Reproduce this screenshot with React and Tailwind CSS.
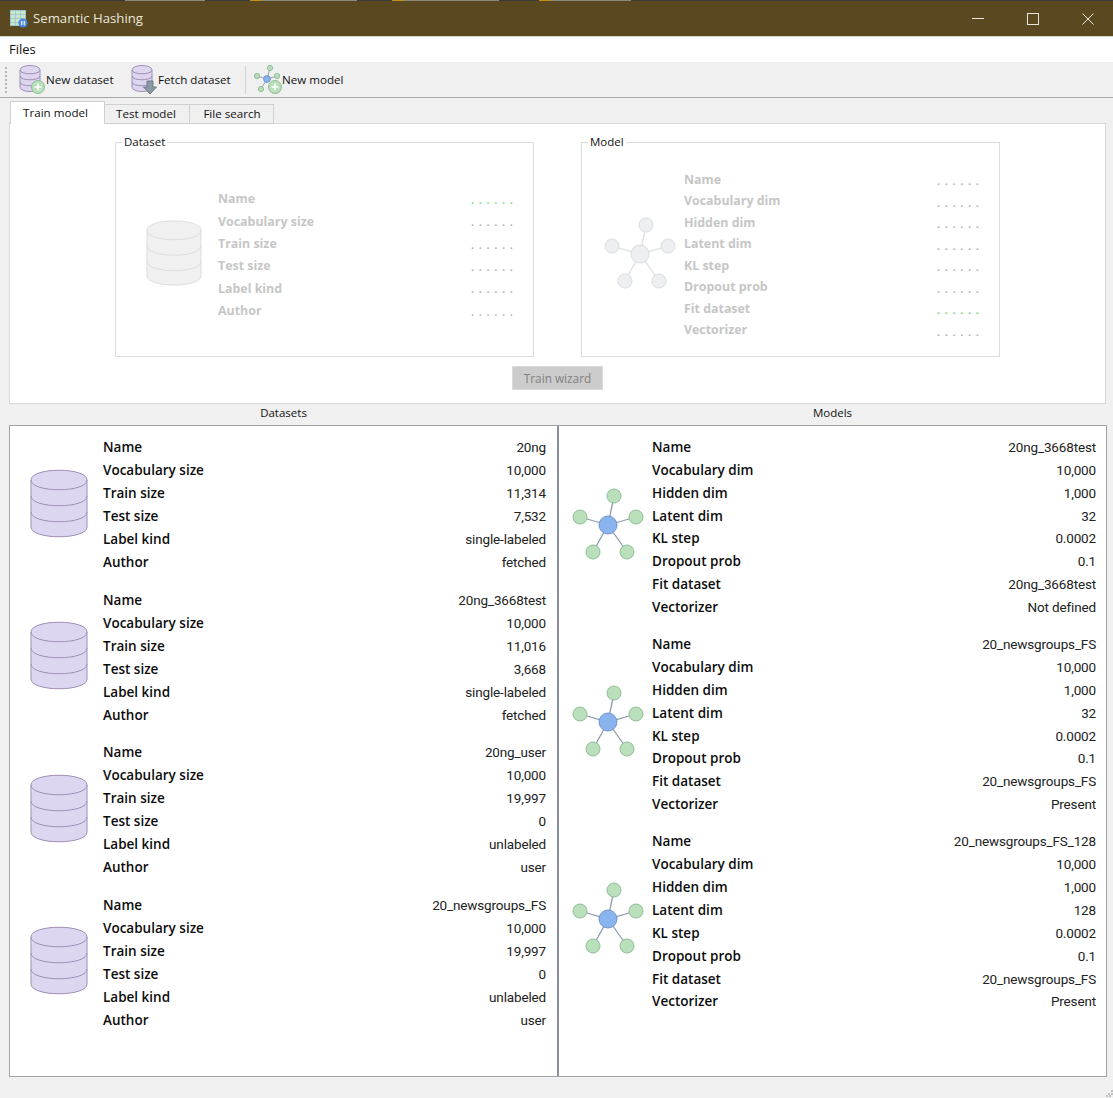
import React from 'react';

const datasets = [
  ['20ng', '10,000', '11,314', '7,532', 'single-labeled', 'fetched'],
  ['20ng_3668test', '10,000', '11,016', '3,668', 'single-labeled', 'fetched'],
  ['20ng_user', '10,000', '19,997', '0', 'unlabeled', 'user'],
  ['20_newsgroups_FS', '10,000', '19,997', '0', 'unlabeled', 'user'],
];
const models = [
  ['20ng_3668test', '10,000', '1,000', '32', '0.0002', '0.1', '20ng_3668test', 'Not defined'],
  ['20_newsgroups_FS', '10,000', '1,000', '32', '0.0002', '0.1', '20_newsgroups_FS', 'Present'],
  ['20_newsgroups_FS_128', '10,000', '1,000', '128', '0.0002', '0.1', '20_newsgroups_FS', 'Present'],
];
const datasetLabels = ['Name', 'Vocabulary size', 'Train size', 'Test size', 'Label kind', 'Author'];
const modelLabels = ['Name', 'Vocabulary dim', 'Hidden dim', 'Latent dim', 'KL step', 'Dropout prob', 'Fit dataset', 'Vectorizer'];

function DbIcon({ w = 58, h = 69, fill = '#ded6f1', stroke = '#a08fb5' }) {
  return (
    <svg width={w} height={h} viewBox="0 0 58 69" className="shrink-0">
      <path d="M1 11 C1 -2 57 -2 57 11 V58 C57 71 1 71 1 58 Z" fill={fill} stroke={stroke} strokeWidth="1" />
      <path d="M1 11 C1 24 57 24 57 11" fill="none" stroke={stroke} strokeWidth="1" />
      <path d="M1 27 C1 40 57 40 57 27" fill="none" stroke={stroke} strokeWidth="1" />
      <path d="M1 43 C1 56 57 56 57 43" fill="none" stroke={stroke} strokeWidth="1" />
    </svg>
  );
}

function NetIcon({ center = '#8ab4ee', centerStroke = '#6f96cc', node = '#b9dfbb', nodeStroke = '#8fbd98', line = '#8d9bb0' }) {
  const nodes = [[42, 8], [8, 29], [64, 29], [21, 64], [55, 64]];
  return (
    <svg width="72" height="72" viewBox="0 0 72 72" className="shrink-0">
      {nodes.map(([x, y]) => (
        <line key={x} x1="36" y1="37" x2={x} y2={y} stroke={line} strokeWidth="1.3" />
      ))}
      {nodes.map(([x, y]) => (
        <circle key={x} cx={x} cy={y} r="7" fill={node} stroke={nodeStroke} strokeWidth="1" />
      ))}
      <circle cx="36" cy="37" r="9" fill={center} stroke={centerStroke} strokeWidth="1" />
    </svg>
  );
}

function PlusBadge({ cx, cy, r }) {
  return (
    <g>
      <circle cx={cx} cy={cy} r={r} fill="#b9dfbb" stroke="#8fbd98" />
      <path d={`M${cx - r + 3} ${cy} H${cx + r - 3} M${cx} ${cy - r + 3} V${cy + r - 3}`} stroke="#fff" strokeWidth="1.6" />
    </g>
  );
}

function ToolDb({ badge }) {
  return (
    <svg width="27" height="30" viewBox="0 0 27 30" className="shrink-0">
      <path d="M1 5 C1 -1 21 -1 21 5 V22 C21 28 1 28 1 22 Z" fill="#ded6f1" stroke="#a08fb5" />
      <path d="M1 5 C1 10 21 10 21 5 M1 11 C1 16 21 16 21 11 M1 17 C1 22 21 22 21 17" fill="none" stroke="#a08fb5" />
      {badge === 'plus' && <PlusBadge cx={19} cy={22} r={6.5} />}
      {badge === 'down' && <path d="M16 16 H22 V22 H25.5 L19 29 L12.5 22 H16 Z" fill="#8b98a5" stroke="#6f7a85" />}
    </svg>
  );
}

function ToolNet() {
  const nodes = [[17, 3], [4, 11], [24, 11], [8, 24]];
  return (
    <svg width="29" height="30" viewBox="0 0 29 30" className="shrink-0">
      {nodes.map(([x, y]) => (
        <line key={x} x1="14" y1="14" x2={x} y2={y} stroke="#9aa7b5" />
      ))}
      {nodes.map(([x, y]) => (
        <circle key={x} cx={x} cy={y} r="2.6" fill="#b9dfbb" stroke="#8fbd98" />
      ))}
      <circle cx="14" cy="14" r="3.4" fill="#8ab4ee" stroke="#6f96cc" />
      <PlusBadge cx={22} cy={22} r={6.5} />
    </svg>
  );
}

function AppIcon() {
  return (
    <svg width="18" height="18" viewBox="0 0 18 18" className="shrink-0">
      <rect x="0.5" y="0.5" width="15" height="15" fill="#c9e6cc" stroke="#9cc3d0" />
      <path d="M0.5 4.5 H15.5 M0.5 8.5 H15.5 M0.5 12.5 H15.5 M5.5 0.5 V15.5 M10.5 0.5 V15.5" stroke="#9cc3d0" strokeWidth="0.8" />
      <circle cx="13" cy="13" r="4.6" fill="#4a86d8" />
      <path d="M11.5 10.8 V15.2 M14.5 10.8 V15.2 M10.8 12 H15.2 M10.8 14 H15.2" stroke="#fff" strokeWidth="0.7" />
    </svg>
  );
}

function ToolButton({ icon, label, className }) {
  return (
    <div className={`flex items-center ${className}`}>
      {icon}
      <span className="text-[11.6px] text-[#111]">{label}</span>
    </div>
  );
}

function GhostRows({ labels, rowClass, greenIndex, dotClass }) {
  return (
    <div className="flex-1 min-w-0">
      {labels.map((label, i) => (
        <div key={label} className={`flex items-center justify-between ${rowClass}`}>
          <span className="text-[12.4px] font-bold text-[#c6c6c6]">{label}</span>
          <span className={`text-[11px] font-bold tracking-[4.6px] mr-[-4.5px] ${dotClass} ${i === greenIndex ? 'text-[#7fd67f]' : 'text-[#b4b4b4]'}`}>......</span>
        </div>
      ))}
    </div>
  );
}

function GroupBox({ title, children }) {
  return (
    <div className="relative w-[419px] h-[215px] border border-[#dcdcdc] flex items-center">
      <span className="absolute left-[6px] top-[-9px] bg-white px-[2px] text-[11.5px] leading-[15px] text-[#111]">{title}</span>
      {children}
    </div>
  );
}

function InfoRows({ labels, values, rowClass }) {
  return (
    <div className="flex-1 min-w-0">
      {labels.map((label, i) => (
        <div key={label} className={`flex items-center justify-between ${rowClass}`}>
          <span className="text-[13.5px] font-semibold text-[#0c0c0c]">{label}</span>
          <span className="font-['Roboto',sans-serif] text-[13.5px] tracking-[-0.15px] text-[#222]">{values[i]}</span>
        </div>
      ))}
    </div>
  );
}

export default function App() {
  return (
    <div className="w-[1113px] h-[1098px] overflow-hidden flex flex-col bg-[#f0f0f0] font-['Open_Sans','Noto_Sans',sans-serif] text-[#111]">
      {/* title bar */}
      <div className="h-[1px] bg-[#3a3a3a] shrink-0 flex">
        <div className="ml-[125px] w-[80px] bg-[#8a8a7a]" />
        <div className="ml-[45px] w-[12px] bg-[#c0901c]" />
        <div className="w-[95px] bg-[#8a8a7a]" />
        <div className="ml-[35px] w-[12px] bg-[#c0901c]" />
        <div className="w-[95px] bg-[#8a8a7a]" />
        <div className="ml-[40px] w-[12px] bg-[#c0901c]" />
        <div className="w-[80px] bg-[#8a8a7a]" />
      </div>
      <div className="h-[36px] shrink-0 bg-[#5a4820] flex items-center pl-[10px] text-[#e9e6dc] border-b border-[#d8d4c6]">
        <AppIcon />
        <span className="ml-[5px] pt-[1px] text-[13.2px]">Semantic Hashing</span>
        <div className="ml-auto flex items-center">
          <div className="w-[12px] h-[1px] bg-[#e9e6dc] mr-[43px]" />
          <div className="w-[12px] h-[12px] border border-[#e9e6dc] mr-[43px]" />
          <svg width="12" height="12" viewBox="0 0 12 12" className="mr-[19px]">
            <path d="M0.5 0.5 L11.5 11.5 M11.5 0.5 L0.5 11.5" stroke="#e9e6dc" strokeWidth="1" />
          </svg>
        </div>
      </div>

      {/* menu */}
      <div className="h-[25px] shrink-0 bg-white flex items-center pl-[9px] text-[13px]">Files</div>

      {/* toolbar */}
      <div className="h-[36px] shrink-0 bg-[#f0f0f0] border-b border-[#a8a8a8] flex items-center pl-[5px]">
        <div className="w-[2px] h-[26px] mr-[12px] border-l-2 border-dotted border-[#b5b5b5]" />
        <ToolButton icon={<ToolDb badge="plus" />} label="New dataset" className="w-[112px]" />
        <ToolButton icon={<ToolDb badge="down" />} label="Fetch dataset" className="w-[114px]" />
        <div className="w-[1px] h-[28px] bg-[#d0d0d0] mr-[7px]" />
        <ToolButton icon={<ToolNet />} label="New model" className="" />
      </div>

      <div className="flex-1 px-[9px] pt-[4px] flex flex-col">
        {/* tabs */}
        <div className="flex items-end h-[22px] relative z-10 -mb-px pl-[1px]">
          <div className="h-[23px] w-[95px] pr-[4px] pb-[1px] bg-white border border-b-0 border-[#d0d0d0] flex items-center justify-center text-[11.6px]">Train model</div>
          <div className="h-[20px] w-[85px] pr-[2px] bg-[#f0f0f0] border border-l-0 border-[#d0d0d0] flex items-center justify-center text-[11.6px]">Test model</div>
          <div className="h-[20px] w-[84px] pl-[1px] bg-[#f0f0f0] border border-l-0 border-[#d0d0d0] flex items-center justify-center text-[11.6px]">File search</div>
        </div>

        {/* tab pane */}
        <div className="h-[281px] w-[1097px] bg-white border border-[#d8d8d8] flex flex-col items-center pt-[18px]">
          <div className="flex gap-[47px]">
            <GroupBox title="Dataset">
              <div className="flex items-center w-full pl-[30px] pr-[20px] pt-[12px]">
                <div className="mr-[16px] pb-[5px]">
                  <DbIcon w={56} h={68} fill="#f0f0f0" stroke="#dcdcdc" />
                </div>
                <GhostRows labels={datasetLabels} rowClass="h-[22.4px]" greenIndex={0} dotClass="pt-[1px]" />
              </div>
            </GroupBox>
            <GroupBox title="Model">
              <div className="flex items-center w-full pl-[22px] pr-[20px] pt-[12px]">
                <div className="mr-[8px] pb-[5px]">
                  <NetIcon center="#eeeff1" centerStroke="#d9dde2" node="#eeeff1" nodeStroke="#d9dde2" line="#dcdfe3" />
                </div>
                <GhostRows labels={modelLabels} rowClass="h-[21.5px]" greenIndex={6} dotClass="pt-[2px]" />
              </div>
            </GroupBox>
          </div>
          <div className="mt-[9px] w-[91px] h-[24px] pt-[1px] bg-[#cccccc] border border-[#dadada] flex items-center justify-center text-[11.8px] text-[#808080]">Train wizard</div>
        </div>

        {/* list headers */}
        <div className="flex w-[1098px] h-[21px] items-center text-[11.5px] pb-[3px]">
          <div className="w-[549px] text-center">Datasets</div>
          <div className="w-[549px] text-center">Models</div>
        </div>

        {/* lists */}
        <div className="flex w-[1098px] h-[652px] bg-white border border-[#a0a3a8]">
          <div className="w-[549px] pt-[9.7px] pl-[20px] pr-[11px] border-r-2 border-[#8a8fa0]">
            {datasets.map((d) => (
              <div key={d[0]} className="flex items-center h-[138px] mb-[14.5px]">
                <div className="w-[73px] pb-[3px]">
                  <DbIcon />
                </div>
                <InfoRows labels={datasetLabels} values={d} rowClass="h-[23px]" />
              </div>
            ))}
          </div>
          <div className="flex-1 pt-[9.5px] pl-[13px] pr-[10px]">
            {models.map((m) => (
              <div key={m[0]} className="flex items-center h-[183.2px] mb-[14px]">
                <div className="w-[80px] pb-[6px]">
                  <NetIcon />
                </div>
                <InfoRows labels={modelLabels} values={m} rowClass="h-[22.9px]" />
              </div>
            ))}
          </div>
        </div>

        {/* resize grip */}
        <div className="flex-1 flex justify-end items-end mr-[-9px]">
          <svg width="7" height="7" viewBox="0 0 7 7" className="mb-[1px]">
            <path d="M5 0 h2 v2 h-2 z M2 3 h2 v2 h-2 z M5 3 h2 v2 h-2 z M0 5 h2 v2 h-2 z M3 5 h2 v2 h-2 z" fill="#c0c0c0" />
          </svg>
        </div>
      </div>
    </div>
  );
}
